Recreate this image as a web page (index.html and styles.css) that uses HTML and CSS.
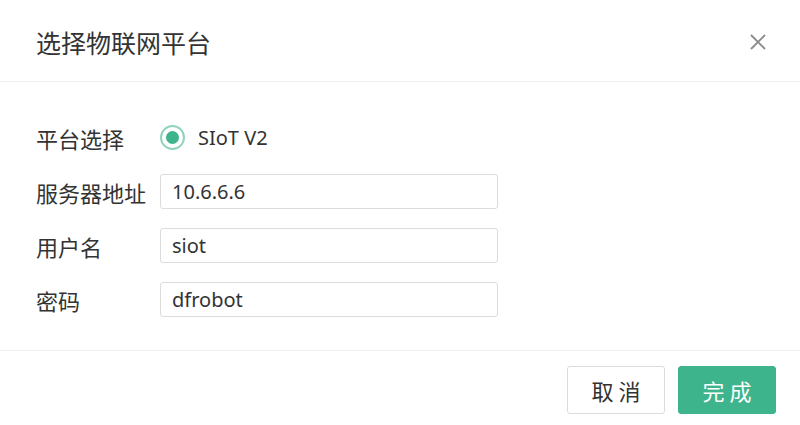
FILE: index.html
```html
<!DOCTYPE html>
<html lang="zh">
<head>
<meta charset="utf-8">
<link rel="stylesheet" href="styles.css">
</head>
<body>
<div class="dialog">
  <div class="header">
    <div class="title">选择物联网平台</div>
    <svg class="close" width="18" height="18" viewBox="0 0 18 18"><path d="M2 2 L16 16 M16 2 L2 16" stroke="#8a8a8a" stroke-width="1.8" fill="none"/></svg>
  </div>
  <div class="body">
    <div class="row">
      <div class="label">平台选择</div>
      <div class="radio"><span class="dot"></span><span class="rtext">SIoT V2</span></div>
    </div>
    <div class="row">
      <div class="label">服务器地址</div>
      <div class="input">10.6.6.6</div>
    </div>
    <div class="row">
      <div class="label">用户名</div>
      <div class="input">siot</div>
    </div>
    <div class="row">
      <div class="label">密码</div>
      <div class="input">dfrobot</div>
    </div>
  </div>
  <div class="footer">
    <button class="btn cancel">取消</button>
    <button class="btn ok">完成</button>
  </div>
</div>
</body>
</html>
```
FILE: styles.css
```css
html, body {
  margin: 0;
  padding: 0;
  background: #fff;
}
body {
  font-family: "Noto Sans", "Noto Sans CJK SC", sans-serif;
  color: #333;
}
.dialog {
  width: 800px;
  height: 425px;
  display: flex;
  flex-direction: column;
}
.header {
  height: 81px;
  border-bottom: 1px solid #efefef;
  display: flex;
  align-items: center;
  justify-content: space-between;
  padding: 0 33px 0 36px;
}
.title {
  font-family: "Noto Sans CJK SC", sans-serif;
  font-size: 25px;
  color: #333;
  margin-top: 2px;
}
.close {
  margin-top: 2px;
}
.body {
  padding: 38px 0 33px 36px;
  display: flex;
  flex-direction: column;
  gap: 19px;
  border-bottom: 1px solid #efefef;
}
.row {
  display: flex;
  align-items: center;
  height: 35px;
}
.label {
  width: 124px;
  font-family: "Noto Sans CJK SC", sans-serif;
  font-size: 22px;
  color: #333;
}
.radio {
  display: flex;
  align-items: center;
}
.dot {
  width: 21px;
  height: 21px;
  border: 2px solid #8fd3bb;
  border-radius: 50%;
  position: relative;
  box-sizing: content-box;
}
.dot::after {
  content: "";
  position: absolute;
  left: 4px;
  top: 4px;
  width: 13px;
  height: 13px;
  border-radius: 50%;
  background: #3db48c;
}
.rtext {
  margin-left: 13px;
  font-size: 20px;
}
.input {
  width: 338px;
  height: 35px;
  box-sizing: border-box;
  border: 1px solid #dcdcdc;
  border-radius: 3px;
  padding-left: 11px;
  font-size: 20px;
  line-height: 33px;
  color: #333;
}
.footer {
  display: flex;
  justify-content: flex-end;
  gap: 13px;
  padding: 15px 24px 0 0;
}
.btn {
  width: 98px;
  height: 48px;
  border-radius: 3px;
  font-family: "Noto Sans CJK SC", sans-serif;
  font-size: 22px;
  letter-spacing: 5px;
  text-indent: 5px;
  cursor: pointer;
}
.cancel {
  background: #fff;
  border: 1px solid #dcdcdc;
  color: #333;
}
.ok {
  background: #3db48c;
  border: 1px solid #3db48c;
  color: #fff;
}
```
